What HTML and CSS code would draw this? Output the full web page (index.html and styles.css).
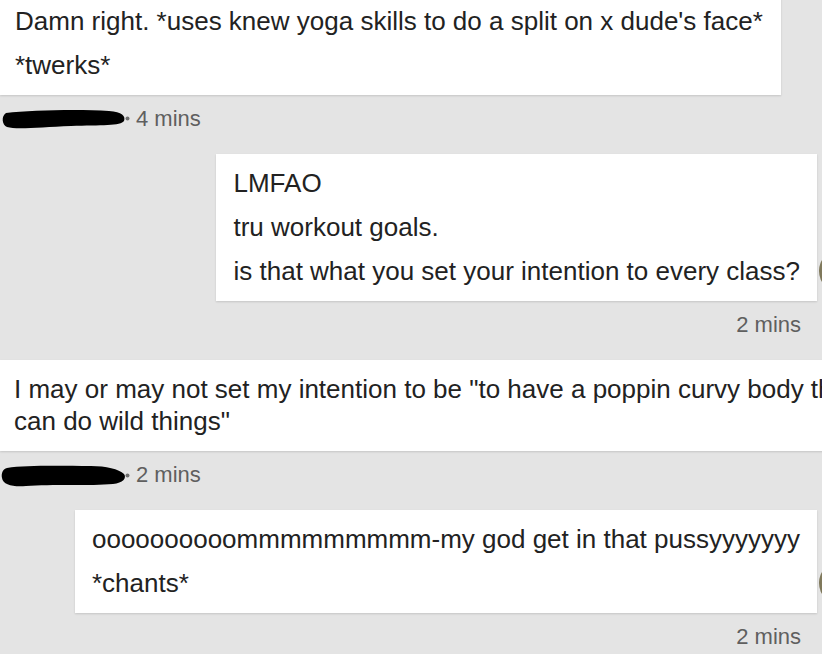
FILE: index.html
```html
<!DOCTYPE html>
<html lang="en">
<head>
    <meta charset="UTF-8">
    <title>Conversation</title>
    <link rel="stylesheet" href="styles.css">
</head>
<body>
    <div class="thread">
        <div class="row first">
            <div class="bubble left">
                <p>Damn right. *uses knew yoga skills to do a split on x dude's face*</p>
                <p>*twerks*</p>
            </div>
        </div>
        <div class="meta">
            <svg class="name" width="130" height="24" viewBox="0 0 130 24">
                <path d="M5 6 C30 3 80 2 108 4 C121 5 125 9 123 14 C120 19 100 18 70 19 C40 20 16 23 6 20 C1 18 0 9 5 6 Z" fill="#000"/>
                <circle cx="126.5" cy="11.5" r="2" fill="#6f6f6f"/>
            </svg>
            <span>4 mins</span>
        </div>

        <div class="row right">
            <div class="bubble">
                <p>LMFAO</p>
                <p>tru workout goals.</p>
                <p>is that what you set your intention to every class?</p>
            </div>
            <div class="avatar"></div>
        </div>
        <div class="meta right"><span>2 mins</span></div>

        <div class="row">
            <div class="bubble left wide">
                <p>I may or may not set my intention to be "to have a poppin curvy body that can do wild things"</p>
            </div>
        </div>
        <div class="meta">
            <svg class="name" width="130" height="24" viewBox="0 0 130 24">
                <path d="M6 5 C25 2 60 3 90 3 C105 3 118 6 123 11 C126 15 122 20 112 21 C90 23 50 21 25 23 C12 24 2 22 1 15 C0 10 2 6 6 5 Z" fill="#000"/>
                <circle cx="126.5" cy="12.5" r="2" fill="#6f6f6f"/>
            </svg>
            <span>2 mins</span>
        </div>

        <div class="row right">
            <div class="bubble">
                <p>oooooooooommmmmmmmm-my god get in that pussyyyyyyy</p>
                <p>*chants*</p>
            </div>
            <div class="avatar"></div>
        </div>
        <div class="meta right"><span>2 mins</span></div>
    </div>
</body>
</html>
```

FILE: styles.css
```css
html, body {
    overflow: hidden;
}
body {
    margin: 0;
    background-color: #e4e4e4;
    font-family: "Liberation Sans", Arial, Helvetica, sans-serif;
    color: #222;
}
.thread {
    width: 900px;
    margin-top: -8px;
}
.row {
    display: flex;
    align-items: flex-end;
}
.row.right {
    justify-content: flex-end;
    padding-right: 37px;
}
.bubble {
    background: #fff;
    padding: 13px 17px 14px 17px;
    box-shadow: 0 1px 2px rgba(0, 0, 0, 0.14);
    font-size: 26px;
    line-height: 32px;
}
.bubble.left {
    padding-left: 15px;
    padding-right: 18px;
}
.bubble.wide {
    max-width: 862px;
    padding-left: 14px;
    padding-right: 14px;
}
.bubble p {
    margin: 0 0 12px 0;
}
.bubble p:last-child {
    margin-bottom: 0;
}
.avatar {
    width: 44px;
    height: 44px;
    border-radius: 50%;
    margin-left: 2px;
    margin-bottom: 8px;
    background: radial-gradient(circle at 40% 45%, #8f8a6c 0%, #7c7558 55%, #b9b39c 100%);
}
.meta {
    display: flex;
    align-items: center;
    height: 24px;
    margin: 12px 0 23px 0;
    font-size: 22px;
    color: #5f5f5f;
}
.meta .name {
    margin: 0 5px 0 1px;
}
.meta.right {
    justify-content: flex-end;
    padding-right: 99px;
}
```
